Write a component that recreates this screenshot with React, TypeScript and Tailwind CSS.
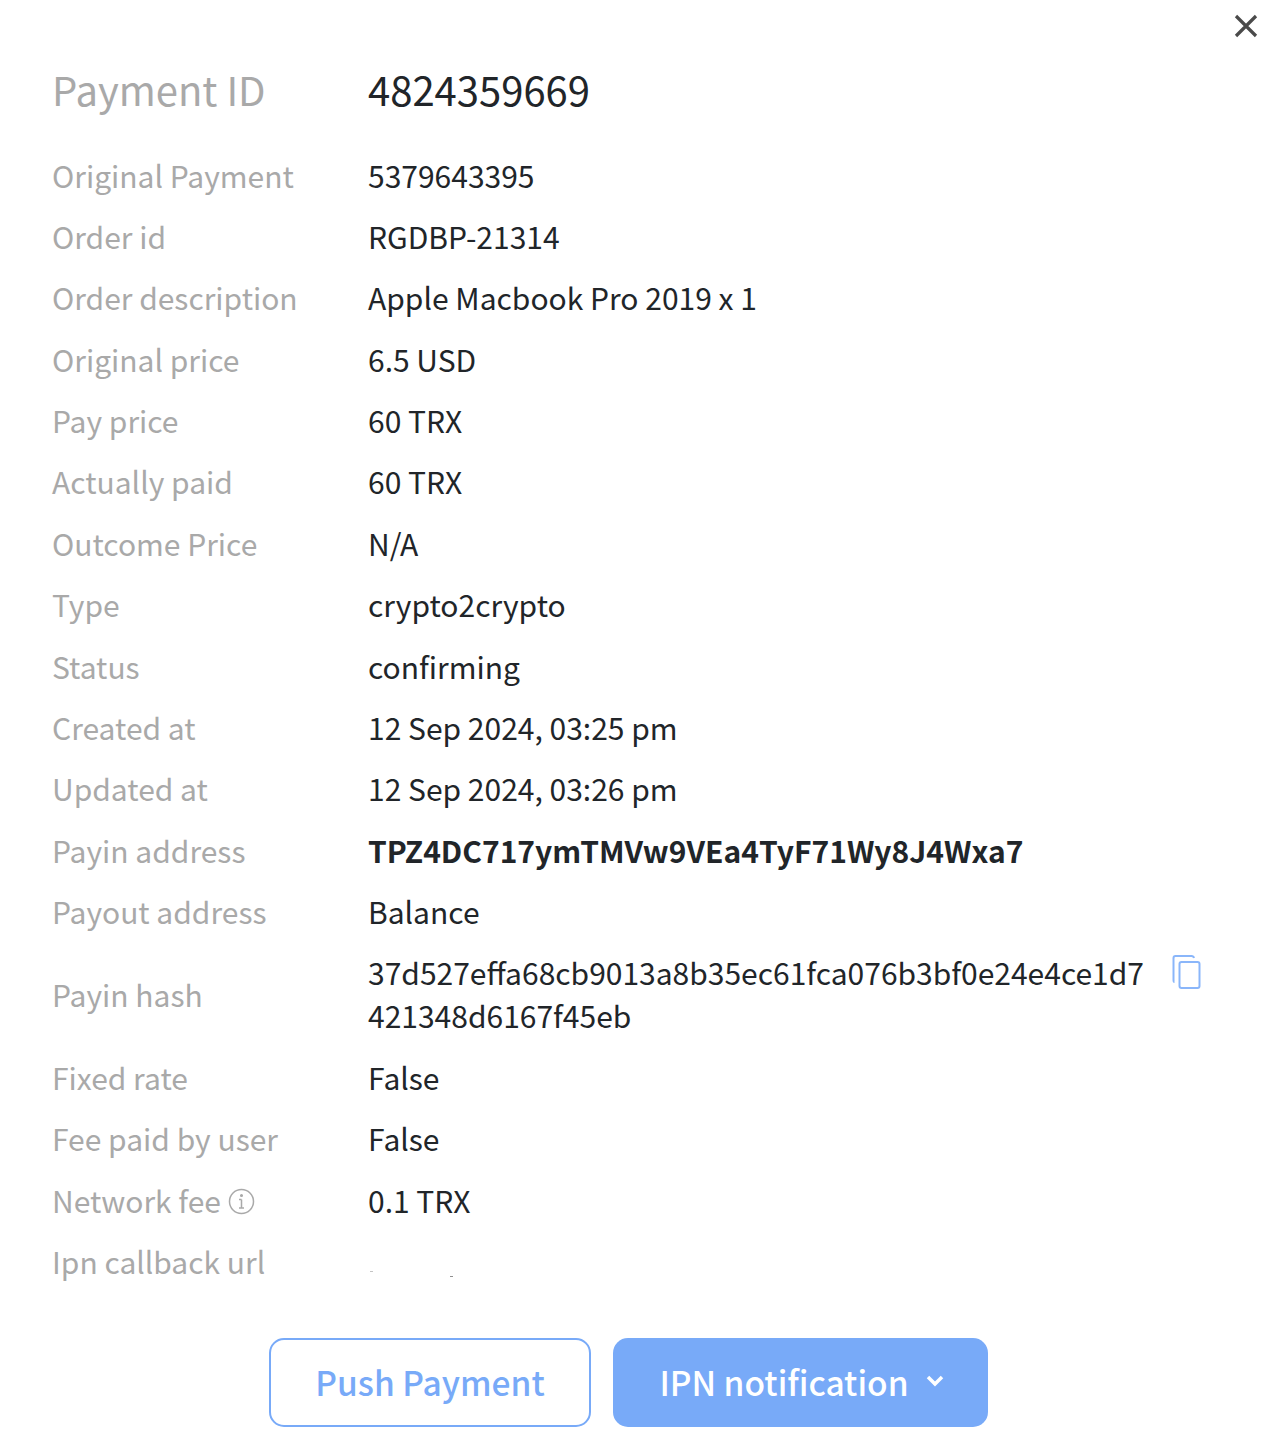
const rows: [string, string][] = [
  ["Original Payment", "5379643395"],
  ["Order id", "RGDBP-21314"],
  ["Order description", "Apple Macbook Pro 2019 x 1"],
  ["Original price", "6.5 USD"],
  ["Pay price", "60 TRX"],
  ["Actually paid", "60 TRX"],
  ["Outcome Price", "N/A"],
  ["Type", "crypto2crypto"],
  ["Status", "confirming"],
  ["Created at", "12 Sep 2024, 03:25 pm"],
  ["Updated at", "12 Sep 2024, 03:26 pm"],
];

const rowsAfter: [string, string][] = [
  ["Fixed rate", "False"],
  ["Fee paid by user", "False"],
];

function Row({ label, children }: { label: React.ReactNode; children: React.ReactNode }) {
  return (
    <div className="grid grid-cols-[316px_1fr] items-center py-[9.2px] text-[30px] leading-[43px]">
      <div className="text-[#a9a9a9]">{label}</div>
      <div className="text-[#212529]">{children}</div>
    </div>
  );
}

function CopyIcon() {
  return (
    <svg width="30" height="36" viewBox="0 0 30 36" fill="none" stroke="#8ab6fa" strokeWidth="2" className="mt-[3px] mr-[1px] shrink-0 translate-x-[0.5px]">
      <path d="M3 28 Q2 28 2 26 V4 Q2 2 4 2 H20 Q22 2 22.500 4" />
      <rect x="8" y="8" width="20" height="26" rx="2" />
    </svg>
  );
}

export default function App() {
  return (
    <div className="relative h-[1438px] w-[1268px] overflow-hidden bg-white font-['Noto_Sans_CJK_JP','Noto_Sans',sans-serif]">
      <button className="absolute left-[1233px] top-[13px] text-[#4a4a4a]" aria-label="Close">
        <svg width="26" height="26" viewBox="0 0 26 26" stroke="currentColor" strokeWidth="3.200" fill="none">
          <path d="M3 3 L23 23 M23 3 L3 23" />
        </svg>
      </button>

      <div className="pl-[52px] pr-[66px] pt-[58px]">
        <div className="mb-[24.4px] grid grid-cols-[316px_1fr] items-center text-[40px] leading-[62px]">
          <div className="text-[#a9a9a9]">Payment ID</div>
          <div className="text-[#212529]">4824359669</div>
        </div>

        {rows.map(([label, value]) => (
          <Row key={label} label={label}>
            {value}
          </Row>
        ))}
        <Row label="Payin address">
          <span className="font-bold">TPZ4DC717ymTMVw9VEa4TyF71Wy8J4Wxa7</span>
        </Row>
        <Row label="Payout address">Balance</Row>
        <Row label="Payin hash">
          <div className="flex justify-between">
            <span className="w-[790px] break-all">37d527effa68cb9013a8b35ec61fca076b3bf0e24e4ce1d7 421348d6167f45eb</span>
            <CopyIcon />
          </div>
        </Row>
        {rowsAfter.map(([label, value]) => (
          <Row key={label} label={label}>
            {value}
          </Row>
        ))}
        <Row
          label={
            <span className="flex items-center gap-[7px]">
              Network fee
              <svg width="27" height="27" viewBox="0 0 27 27" fill="none" stroke="#a9a9a9" strokeWidth="1.500" className="mt-[3px]">
                <circle cx="13.500" cy="13.500" r="12" />
                <path d="M13.500 11.500 V20 M11 11.500 H13.500 M11 20 H16" />
                <circle cx="13.500" cy="7.500" r="0.800" fill="#a9a9a9" />
              </svg>
            </span>
          }
        >
          0.1 TRX
        </Row>
        <Row label="Ipn callback url">
          <span className="flex h-[43px] items-start gap-[77px] pl-[2px] pt-[31px]">
            <span className="h-px w-[3px] bg-[#c4c4c4]" />
            <span className="mt-[5px] h-px w-[3px] bg-[#8f8f8f]" />
          </span>
        </Row>
      </div>

      <div className="mt-[46px] flex justify-center gap-[22px] pr-[12px]">
        <button className="h-[89px] w-[322px] rounded-[15px] border-2 border-[#78aaf8] bg-white pb-[2px] pl-[1px] text-[33.5px] font-medium text-[#78aaf8]">
          Push Payment
        </button>
        <button className="flex h-[89px] w-[375px] items-center justify-center gap-[16px] rounded-[15px] bg-[#78aaf8] pb-[2px] pl-[4px] text-[33.5px] font-medium text-white">
          IPN notification
          <svg width="20" height="14" viewBox="0 0 20 14" fill="none" stroke="currentColor" strokeWidth="3.500" className="mb-[2px]">
            <path d="M3 3 L10 10 L17 3" />
          </svg>
        </button>
      </div>
    </div>
  );
}
